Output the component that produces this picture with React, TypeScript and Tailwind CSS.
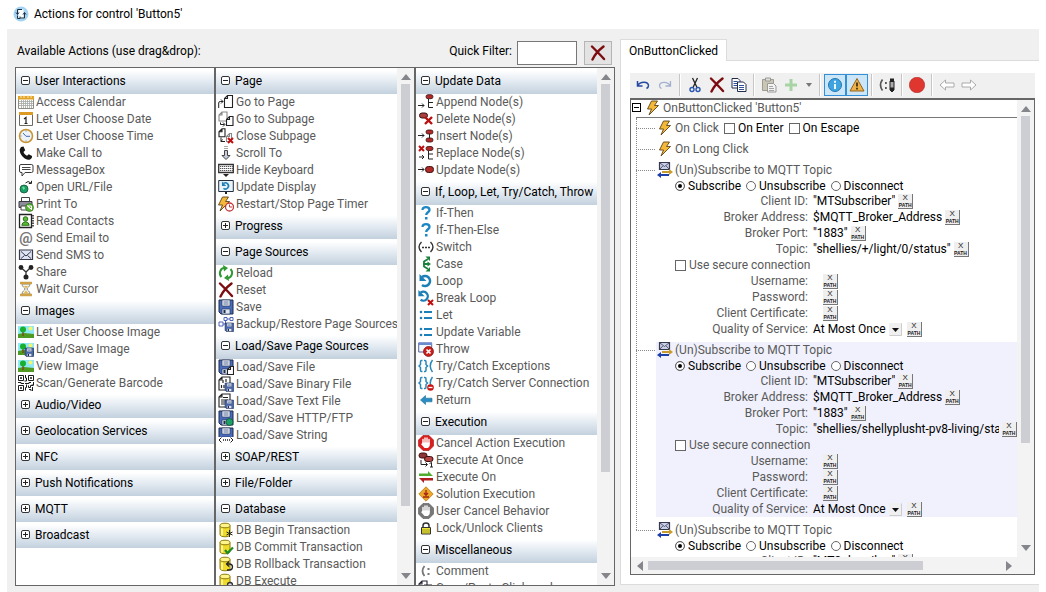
import React from "react"

const floppy = (
  <g>
    <path d="M1 1h14v14H3l-2-2z" fill="#4a6cb8" stroke="#1d2b50" />
    <path d="M4 1h8v6H4z" fill="#e8edf5" stroke="#1d2b50" strokeWidth=".6" />
    <path d="M5.500 3h5M5.500 5h5" stroke="#5f7299" />
    <path d="M4 10h8v5H4z" fill="#dfe5ee" stroke="#1d2b50" strokeWidth=".6" />
    <path d="M5.500 11h2v3h-2z" fill="#1d2b50" />
  </g>
)

const smallFloppy = <g transform="translate(6.500 6.500) scale(.6)">{floppy}</g>

const landscape = (
  <g>
    <path d="M0 2h16v12H0z" fill="#8fe9f5" />
    <circle cx="12.500" cy="4.500" r="2" fill="#f3f56a" />
    <path d="M0 10l6-1 10 1v4H0z" fill="#4f9a20" />
    <path d="M4.300 7h1.400v5H4.300z" fill="#7a4a12" />
    <circle cx="5" cy="5.500" r="3" fill="#18b02c" />
  </g>
)

const smallX = <path d="M10 10l5 5M15 10l-5 5" stroke="#c00d0d" strokeWidth="2" />

const database = (
  <g>
    <path d="M2 3.500v9c0 1.300 2 2.300 5 2.300s5-1 5-2.300v-9" fill="#f0dc28" stroke="#8c7a10" />
    <ellipse cx="7" cy="3.500" rx="5" ry="2.300" fill="#fff58a" stroke="#8c7a10" />
    <path d="M4 6.500v7" stroke="#fffbc0" strokeWidth="1.500" />
  </g>
)

const bolt = <path d="M6.500 1h6L9.500 5.500h4L4 15l2.500-6H2.500z" fill="#f5b93a" stroke="#5f4418" strokeWidth=".9" strokeLinejoin="round" />

const loopArrow = (
  <g>
    <path d="M4 4A5 5 0 1 1 4 12" fill="none" stroke="#1d7fb8" strokeWidth="2.600" />
    <path d="M1.500 1v7h7z" fill="#1d7fb8" />
  </g>
)

const hand = (
  <g>
    <path d="M5 9V4.500M7 8V3M9 8V3M11 9V4.500" stroke="#fff" strokeWidth="1.400" strokeLinecap="round" />
    <path d="M4.300 7.500h7.400V11L10 13H6.500L3 9l1-.5z" fill="#fff" />
  </g>
)

const nodeBlob = (y: number) => (
  <rect x="8" y={y} width="7" height="4" rx="2" fill="#b02a2a" stroke="#3d1010" strokeWidth=".8" />
)

const page = (x: number, y: number, w: number, h: number, stroke: string) => (
  <path d={`M${x + 3} ${y}h${w - 3}v${h}h${-w}v${3 - h}zv3h-3`} fill="#fff" stroke={stroke} strokeWidth="1.100" />
)

const letAssign = (
  <g fill="#1d7fb8">
    <circle cx="3" cy="5" r="1.300" />
    <circle cx="3" cy="11" r="1.300" />
    <path d="M6 4h8v2H6zM6 10h8v2H6z" />
  </g>
)

const braces = (
  <path
    d="M4.500 2.500H3.500Q2.500 2.500 2.500 4v2.500L1 8l1.500 1.500V12q0 1.500 1 1.500h1M6 2.500h1Q8 2.500 8 4v2.500L9.500 8 8 9.500V12q0 1.500-1 1.500H6M14.500 2q-4.500 6 0 12"
    fill="none"
    stroke="#2a88b8"
    strokeWidth="1.500"
  />
)

const question = (
  <g>
    <path d="M4.500 5C4.500 1 11.500 1.300 11.500 5c0 2.300-3.300 2.300-3.300 5" fill="none" stroke="#1d86c4" strokeWidth="2.300" />
    <path d="M7 12h2.500v2.500H7z" fill="#1d86c4" />
  </g>
)

const redX = <path d="M2 1.500c3 3 8 8 12 12.500M13.500 1.500C9 5 5 9 2.500 14.500" fill="none" stroke="#7c0c10" strokeWidth="2.400" strokeLinecap="round" />

const clock = (
  <g>
    <circle cx="8" cy="8" r="6.500" fill="#eef3fa" stroke="#c79533" strokeWidth="1.600" />
    <path d="M5 5l3 3.300h4" fill="none" stroke="#3d6fae" />
    <path d="M8 2.500v1M8 12.500v1M2.500 8h1" stroke="#777" />
  </g>
)

const icons: Record<string, React.ReactNode> = {
  calendar: (
    <g>
      <path d="M.5 2.500h15v12H.5z" fill="#fff" stroke="#8d8d80" />
      <path d="M0 2h16v3.500H0z" fill="#e2a326" />
      <path d="M3 1v3M6 1v3M10 1v3M13 1v3" stroke="#fbe8b8" />
      <path d="M1 7.500h14M1 9.500h14M1 11.500h14M3.500 6v8M5.500 6v8M7.500 6v8M9.500 6v8M11.500 6v8M13.500 6v8" stroke="#a5aaa5" strokeWidth=".8" />
    </g>
  ),
  date: (
    <g>
      <path d="M1.500 1.500h13v13h-13z" fill="#fff" stroke="#6b6a60" />
      <path d="M1 1h14v3H1z" fill="#dd9a22" />
      <path d="M6 8l2-1.500v6M6.500 12.500h3" fill="none" stroke="#222" strokeWidth="1.200" />
    </g>
  ),
  clock,
  phone: <path d="M3 2l2.500-.5 1.700 3.700L5.500 7c.6 1.700 1.800 3 3.500 3.800l1.800-1.600L14 11c.5 2-1.500 4-4 3.700C5.500 14 1.500 9 1.700 4.500z" fill="#161616" />,
  message: (
    <g>
      <path d="M3 2.500h10.500q1.500 0 1.500 1.500v5q0 1.500-1.500 1.500H7L4 14v-3.500H3Q1.500 10.500 1.500 9V4Q1.500 2.500 3 2.500z" fill="#fff" stroke="#3a3a3a" />
      <path d="M4 5.500h8.500M4 7.500h8.500" stroke="#444" />
    </g>
  ),
  url: (
    <g>
      <circle cx="6" cy="10" r="4" fill="#18a06a" stroke="#174f34" strokeWidth=".8" />
      <path d="M4 8l2-.5 1 2-1.500 1.500z" fill="#6ddf8a" />
      <path d="M7.500 4Q10 1 13 4M10.800 4.500h2.700V1.800" fill="none" stroke="#222" />
    </g>
  ),
  print: (
    <g>
      <path d="M3.500 1.500h8v4h-8z" fill="#fff" stroke="#444" />
      <path d="M1 5.500h13v6H1z" fill="#8d8d99" stroke="#3a3a44" />
      <path d="M3 10h7v4H3z" fill="#fff" stroke="#444" />
      <circle cx="11.500" cy="11.500" r="4" fill="#5cb338" stroke="#2d6e17" strokeWidth=".7" />
      <path d="M9.500 10h4v3.500zM9.500 9.500l4 4" fill="none" stroke="#fff" />
    </g>
  ),
  contacts: (
    <g>
      <path d="M1.500 1.500h12v13h-12z" fill="#fff" stroke="#222" strokeWidth="1.300" />
      <path d="M15 2v12" stroke="#222" strokeWidth="1.500" strokeDasharray="1.500 1" />
      <circle cx="7.500" cy="6" r="2.300" fill="#5bbd35" stroke="#2b751c" />
      <path d="M3.800 12.300q0-3 3.700-3.500 3.700.5 3.700 3.500z" fill="#5bbd35" stroke="#2b751c" />
    </g>
  ),
  sms: (
    <g>
      <path d="M1.500 3h13v9.500h-13z" fill="#dfe3f3" stroke="#35394a" strokeWidth="1.200" />
      <path d="M3 4.500l5 4.500 5-4.500M3 11.500l3.500-3M13 11.500l-3.500-3" fill="none" stroke="#35394a" />
    </g>
  ),
  share: (
    <g>
      <path d="M3 3.500L8 8l5-5M8 8v4" fill="none" stroke="#333" strokeWidth="1.300" />
      <circle cx="3" cy="3.500" r="2.400" fill="#222" />
      <circle cx="13" cy="3.500" r="2.400" fill="#222" />
      <circle cx="8" cy="13" r="2.500" fill="#222" />
    </g>
  ),
  hourglass: (
    <g>
      <path d="M4 3c0 3 3 3.500 3 5s-3 2-3 5h8c0-3-3-3.500-3-5s3-2 3-5z" fill="#f6f3e4" stroke="#8a8f88" />
      <path d="M2 .8h12v2.400H2zM2 12.800h12v2.400H2z" fill="#cfa24a" />
      <path d="M5.500 12.500L8 9.500l2.500 3zM6 5h4L8 7.500z" fill="#e3b64f" />
    </g>
  ),
  image: landscape,
  loadImage: (
    <g>
      {landscape}
      {smallFloppy}
    </g>
  ),
  barcode: (
    <path
      d="M.5.500h5v5h-5zM10.500.500h5v5h-5zM.5 10.500h5v5h-5zM2.500 2.500h1v1h-1zM12.500 2.500h1v1h-1zM2.500 12.500h1v1h-1zM7.500 0v3h1v3h-2M0 7.500h3v1h3M7 8.500h4v-1h2M15.500 7v3h-2M8.500 9.500v3h-1v3M10.500 10.500v2h2v-2h3M11 14.500h2v1.500M14.500 12v4"
      fill="none"
      stroke="#1c1c1c"
    />
  ),
  goPage: (
    <g>
      {page(6.500, 1.500, 8, 12, "#222")}
      <path d="M.7 14V9q0-1.500 1.500-1.500H5M3 5.500l2 2-2 2" fill="none" stroke="#222" />
    </g>
  ),
  goSubpage: (
    <g>
      {page(1, 1, 8, 9, "#888")}
      {page(8.500, 5.500, 6.500, 9, "#222")}
      <path d="M2.500 11.500v2h4M5 11.500l2 2-2 2" fill="none" stroke="#222" />
    </g>
  ),
  closeSubpage: (
    <g>
      {page(1, .8, 6, 8, "#222")}
      {page(8.500, 5.500, 5, 8, "#888")}
      <path d="M3 9.500v4h4M4.500 11.500l-1.500 2" fill="none" stroke="#222" />
      {smallX}
    </g>
  ),
  scroll: (
    <g>
      <path d="M6 1.500h4M6 3.500h4" stroke="#aaa" />
      <path d="M6.500 5.500h3v5H12L8 14.500 4 10.500h2.500z" fill="#c9ccdc" stroke="#444" />
    </g>
  ),
  keyboard: (
    <g>
      <path d="M.7 2.500h14.600v8H.7z" fill="#fff" stroke="#333" strokeWidth="1.300" />
      <path d="M2 4.500h13M2 6.500h13M2 8.500h13" stroke="#555" strokeDasharray="1.300 .7" />
      <path d="M5 12h6L8 15z" fill="#222" />
    </g>
  ),
  display: (
    <g>
      <path d="M.7 1.500h14.600v11H.7z" fill="#e9f3fa" stroke="#223040" />
      <g transform="translate(3 2) scale(.62)">{loopArrow}</g>
      <path d="M7 13h2v2H7z" fill="#222" />
    </g>
  ),
  timer: (
    <g>
      <g transform="translate(-2 0)">{bolt}</g>
      <circle cx="11.500" cy="11" r="4" fill="#fff" stroke="#c23a3a" strokeWidth="1.300" />
      <path d="M11.500 8.500V11H14" fill="none" stroke="#c23a3a" />
    </g>
  ),
  reload: (
    <g>
      <path d="M3.500 12A5.500 5.500 0 0 1 6 2.800M12.500 4A5.500 5.500 0 0 1 10 13.200" fill="none" stroke="#2f9a33" strokeWidth="2" />
      <path d="M5 0l5 3-4 3.500zM11 16l-5-3 4-3.500z" fill="#2f9a33" />
    </g>
  ),
  redX,
  save: floppy,
  backup: (
    <g>
      <path d="M1 6h4v4H1zM6 1.500h3v3H6zM12 1.500h3v3h-3zM5 8h4M7.500 5v8M9 3h3" fill="none" stroke="#4c63b8" />
      {smallFloppy}
    </g>
  ),
  saveFile: (
    <g>
      {floppy}
      {page(9.500, 7.500, 6, 8, "#222")}
    </g>
  ),
  saveBinary: (
    <g>
      {page(1, 1, 11, 13, "#222")}
      <path d="M5 4v3M8 3v3M3.500 9v3M6 9v3" stroke="#222" strokeWidth="1.200" />
      {smallFloppy}
    </g>
  ),
  saveText: (
    <g>
      {page(1, 1, 11, 13, "#222")}
      <path d="M5 4.500h5M3 7h7M3 9h5M3 11h4" stroke="#222" />
      {smallFloppy}
    </g>
  ),
  saveHttp: (
    <g>
      {floppy}
      <circle cx="11.500" cy="12" r="3.500" fill="#1ba367" stroke="#174f34" strokeWidth=".8" />
    </g>
  ),
  saveString: (
    <g>
      {floppy}
      <path d="M0 10h16v6H0z" fill="#fff" />
      <path d="M3.500 10.500L1 13l2.500 2.500M12.500 10.500L15 13l-2.500 2.500" fill="none" stroke="#222" />
      <path d="M5 13h7" stroke="#222" strokeDasharray="1 1" strokeWidth="1.500" />
    </g>
  ),
  dbBegin: (
    <g>
      {database}
      <path d="M11.500 8v7M8.500 10l6 3M14.500 10l-6 3" stroke="#222" />
    </g>
  ),
  dbCommit: (
    <g>
      {database}
      <path d="M7 11l2.500 3L15 8.500" fill="none" stroke="#1f8d27" strokeWidth="2.200" />
    </g>
  ),
  dbRollback: (
    <g>
      {database}
      <path d="M9 8h3q2.500.5 2.500 3T12 14H9M11 5.500L8.500 8l2.500 2.500" fill="none" stroke="#222" strokeWidth="1.300" />
    </g>
  ),
  dbExecute: (
    <g>
      {database}
      <circle cx="12" cy="12" r="2.500" fill="#ddd" stroke="#333" strokeWidth="1.300" />
    </g>
  ),
  appendNode: (
    <g>
      {nodeBlob(.7)}
      <path d="M10.500 5v8.500M10.500 8.500H15M10.500 13.500H15M0 11.500h6M4 9.500l2 2-2 2" fill="none" stroke="#222" />
    </g>
  ),
  deleteNode: (
    <g>
      <rect x="1.500" y="2" width="8" height="5" rx="2.500" fill="#a84040" stroke="#3d1010" />
      <path d="M7 6l7 7M14 6l-7 7" stroke="#b80f0f" strokeWidth="2.400" />
    </g>
  ),
  insertNode: (
    <g>
      {nodeBlob(2)}
      {nodeBlob(10)}
      <path d="M11.500 6v4M0 7.500h6M4 5.500l2 2-2 2" fill="none" stroke="#222" />
    </g>
  ),
  replaceNode: (
    <g>
      <path d="M1 1l5 5M6 1L1 6" stroke="#b80f0f" strokeWidth="2" />
      {nodeBlob(1.500)}
      <path d="M10.500 6v8M10.500 9H15M10.500 14H15M1 12h5M4 10l2 2-2 2" fill="none" stroke="#222" />
    </g>
  ),
  updateNode: (
    <g>
      <rect x="7.500" y="4.500" width="8" height="6" rx="2.800" fill="#b02a2a" stroke="#3d1010" />
      <path d="M0 7.500h6M4 5.500l2 2-2 2" fill="none" stroke="#222" />
    </g>
  ),
  question,
  switch: (
    <g>
      <path d="M3.500 3q-5 5 0 10M12.500 3q5 5 0 10" fill="none" stroke="#333" strokeWidth="1.400" />
      <path d="M4 8.500h2M7 8.500h2M10 8.500h2" stroke="#333" strokeWidth="1.600" />
    </g>
  ),
  caseIcon: (
    <g>
      <path d="M6 8V5.500L10 3M6 8v2.500L10 13M5 8h5" fill="none" stroke="#1a7f3c" strokeWidth="1.800" />
      <path d="M7.500.5H12V5zM7.500 15.500H12V11zM9.500 5.500L13 8l-3.500 2.500z" fill="#1a7f3c" />
    </g>
  ),
  loop: loopArrow,
  breakLoop: (
    <g>
      <g transform="translate(-1 -1) scale(.9)">{loopArrow}</g>
      {smallX}
    </g>
  ),
  letAssign,
  throwIcon: (
    <g>
      <path d="M.7 2h13v9H.7z" fill="#f4f7fc" stroke="#55669c" />
      <path d="M.5 1.500h13.500v2.500H.5z" fill="#6b8bd0" />
      <circle cx="10.500" cy="10.500" r="5" fill="#c9201c" stroke="#7d1010" strokeWidth=".7" />
      <path d="M8.500 8.500l4 4M12.500 8.500l-4 4" stroke="#fff" strokeWidth="1.700" />
    </g>
  ),
  braces,
  bracesServer: (
    <g>
      {braces}
      <circle cx="12.500" cy="12.500" r="3.300" fill="#cc1414" />
      <path d="M10.500 12.500h4" stroke="#fff" strokeWidth="1.300" />
    </g>
  ),
  returnIcon: <path d="M2.500 8L7.500 3.500v2.700H14v3.600H7.500v2.700z" fill="#2b8cc0" stroke="#1d6f9e" strokeWidth=".6" />,
  cancel: (
    <g>
      <path d="M5 .5h6L15.500 5v6L11 15.500H5L.5 11V5z" fill="#da1e1e" stroke="#a30e0e" strokeWidth=".6" />
      {hand}
    </g>
  ),
  executeOnce: (
    <g>
      <rect x="1" y="1" width="8" height="5" rx="2.500" fill="#8d3434" stroke="#3d1010" />
      <rect x="6.500" y="4.500" width="8.500" height="5" rx="2.500" fill="#b54747" stroke="#3d1010" />
      <path d="M3 8v4.500h6M7.500 10.500l2 2-2 2M11.500 11.500l2-1v4.500M12 15h3" fill="none" stroke="#222" />
    </g>
  ),
  executeOn: (
    <g>
      <path d="M1 4.500h9V2l5 5H1z" fill="#4fae2f" />
      <path d="M15 9H1l5 5v-2.500h9z" fill="#b02020" />
    </g>
  ),
  solution: (
    <g>
      <path d="M8 .8L15.200 8 8 15.200.8 8z" fill="#eba829" stroke="#b57a14" strokeWidth=".8" />
      <path d="M8 4v5M6 7l2 2.300L10 7M5 11h6" fill="none" stroke="#a52615" strokeWidth="1.300" />
    </g>
  ),
  userCancel: (
    <g>
      <path d="M5 .5h6L15.500 5v6L11 15.500H5L.5 11V5z" fill="#777" stroke="#555" strokeWidth=".6" />
      {hand}
    </g>
  ),
  lock: (
    <g>
      <path d="M5 8V5.500Q5 3 8 3t3 2.500V8" fill="none" stroke="#333" strokeWidth="1.500" />
      <path d="M3.500 7.500h9v6.500h-9z" fill="#ece43a" stroke="#333" />
      <path d="M4 10h8M4 12h8" stroke="#8f8a1b" strokeWidth=".8" />
    </g>
  ),
  comment: (
    <g>
      <path d="M6.500 3q-4 5 0 10" fill="none" stroke="#777" strokeWidth="1.800" />
      <path d="M9.500 5h2v2h-2zM9.500 10h2v2h-2z" fill="#777" />
    </g>
  ),
  clipboard: (
    <g>
      {page(1, 1, 8, 10, "#223")}
      <path d="M6 5h8v10H6z" fill="#6c88d0" stroke="#223" />
    </g>
  ),
  bolt,
  mqtt: (
    <g>
      <path d="M2.500.500h10v7h-10z" fill="#c9d0ea" stroke="#35394a" strokeWidth="1.200" />
      <path d="M3 1l4.500 3.500L12 1M3 7l2.800-3M12 7L9.200 4" fill="none" stroke="#35394a" strokeWidth=".8" />
      <path d="M5 9h7V7l4 3-4 3v-2H5z" fill="#c99a2e" />
      <path d="M12 12H4v-2l-4 3 4 3v-2h8z" fill="#1c3fa8" />
    </g>
  ),
  undo: <path d="M2.500 4v5h5M3 8.500C5 4.500 13 4 13.500 8.500q0 2-2 3" fill="none" stroke="#2448a0" strokeWidth="1.500" />,
  redo: <path d="M13.500 4v5h-5M13 8.500C11 4.500 3 4 2.500 8.500q0 2 2 3" fill="none" stroke="#a3b1cf" strokeWidth="1.300" />,
  cut: (
    <g>
      <path d="M5.500 1L10 10.500M10.500 1L6 10.500" stroke="#222" strokeWidth="1.300" />
      <circle cx="5" cy="12.500" r="2" fill="none" stroke="#2a56b0" strokeWidth="1.400" />
      <circle cx="11" cy="12.500" r="2" fill="none" stroke="#2a56b0" strokeWidth="1.400" />
    </g>
  ),
  copy: (
    <g>
      <path d="M1 1.500h6l2 2V11H1z" fill="#fff" stroke="#222b4a" />
      <path d="M2.500 4.500h4M2.500 6.500h4M2.500 8.500h4" stroke="#34509a" />
      <path d="M6.500 5h6L15 7.500v7H6.500z" fill="#fff" stroke="#222b4a" />
      <path d="M8 8.500h5M8 10.500h5M8 12.500h5" stroke="#34509a" />
    </g>
  ),
  paste: (
    <g>
      <path d="M1.500 2.500h11v11h-11z" fill="#cbc6b4" stroke="#a09c8d" />
      <path d="M4.500 1h5v3h-5z" fill="#ddd" stroke="#999" />
      <path d="M6.500 6.500h6L15 9v6H6.500z" fill="#f3f3f3" stroke="#999" />
      <path d="M8 9.500h4M8 11.500h5M8 13.500h5" stroke="#a5a5a5" />
    </g>
  ),
  add: <path d="M6.500 2h3v4.500H14v3H9.500V14h-3V9.500H2v-3h4.500z" fill="#a7d3a5" />,
  info: (
    <g>
      <circle cx="8" cy="8" r="6.500" fill="#3fa4e0" stroke="#2378b0" />
      <path d="M8 3.800v2M8 7v5" stroke="#fff" strokeWidth="1.800" />
    </g>
  ),
  warning: (
    <g>
      <path d="M8 1.500L15 14H1z" fill="#f0b248" stroke="#8f6420" strokeLinejoin="round" />
      <path d="M8 5.500v4M8 10.800v1.700" stroke="#2f220d" strokeWidth="1.600" />
    </g>
  ),
  commentToggle: (
    <g>
      <path d="M3.500 2.500q-4 5.500 0 11" fill="none" stroke="#555" strokeWidth="1.700" />
      <path d="M6 5h1.800v2H6zM6 10h1.800v2H6z" fill="#555" />
      <path d="M11 4h4v9l-2 2-2-2z" fill="#aaa" stroke="#222" />
      <path d="M11 1.500h4V5h-4zM11 10.500h4V13l-2 2-2-2z" fill="#222" />
    </g>
  ),
  breakpoint: <circle cx="8" cy="8" r="7.700" fill="#df3630" stroke="#b02a26" strokeWidth=".6" />,
  back: <path d="M1 8l5.500-5v3H15v4H6.500v3z" fill="#fff" stroke="#aaa" />,
  forward: <path d="M15 8L9.500 3v3H1v4h8.500v3z" fill="#fff" stroke="#aaa" />,
}

function Icon({ name }: { name: string }) {
  return (
    <svg viewBox="0 0 16 16" className="w-4 h-4 shrink-0" aria-hidden="true">
      {icons[name]}
    </svg>
  )
}

interface Section {
  title: string
  items?: [string, string][]
}

const columns: Section[][] = [
  [
    {
      title: "User Interactions",
      items: [
        ["calendar", "Access Calendar"],
        ["date", "Let User Choose Date"],
        ["clock", "Let User Choose Time"],
        ["phone", "Make Call to"],
        ["message", "MessageBox"],
        ["url", "Open URL/File"],
        ["print", "Print To"],
        ["contacts", "Read Contacts"],
        ["at", "Send Email to"],
        ["sms", "Send SMS to"],
        ["share", "Share"],
        ["hourglass", "Wait Cursor"],
      ],
    },
    {
      title: "Images",
      items: [
        ["image", "Let User Choose Image"],
        ["loadImage", "Load/Save Image"],
        ["image", "View Image"],
        ["barcode", "Scan/Generate Barcode"],
      ],
    },
    { title: "Audio/Video" },
    { title: "Geolocation Services" },
    { title: "NFC" },
    { title: "Push Notifications" },
    { title: "MQTT" },
    { title: "Broadcast" },
  ],
  [
    {
      title: "Page",
      items: [
        ["goPage", "Go to Page"],
        ["goSubpage", "Go to Subpage"],
        ["closeSubpage", "Close Subpage"],
        ["scroll", "Scroll To"],
        ["keyboard", "Hide Keyboard"],
        ["display", "Update Display"],
        ["timer", "Restart/Stop Page Timer"],
      ],
    },
    { title: "Progress" },
    {
      title: "Page Sources",
      items: [
        ["reload", "Reload"],
        ["redX", "Reset"],
        ["save", "Save"],
        ["backup", "Backup/Restore Page Sources"],
      ],
    },
    {
      title: "Load/Save Page Sources",
      items: [
        ["saveFile", "Load/Save File"],
        ["saveBinary", "Load/Save Binary File"],
        ["saveText", "Load/Save Text File"],
        ["saveHttp", "Load/Save HTTP/FTP"],
        ["saveString", "Load/Save String"],
      ],
    },
    { title: "SOAP/REST" },
    { title: "File/Folder" },
    {
      title: "Database",
      items: [
        ["dbBegin", "DB Begin Transaction"],
        ["dbCommit", "DB Commit Transaction"],
        ["dbRollback", "DB Rollback Transaction"],
        ["dbExecute", "DB Execute"],
      ],
    },
  ],
  [
    {
      title: "Update Data",
      items: [
        ["appendNode", "Append Node(s)"],
        ["deleteNode", "Delete Node(s)"],
        ["insertNode", "Insert Node(s)"],
        ["replaceNode", "Replace Node(s)"],
        ["updateNode", "Update Node(s)"],
      ],
    },
    {
      title: "If, Loop, Let, Try/Catch, Throw",
      items: [
        ["question", "If-Then"],
        ["question", "If-Then-Else"],
        ["switch", "Switch"],
        ["caseIcon", "Case"],
        ["loop", "Loop"],
        ["breakLoop", "Break Loop"],
        ["letAssign", "Let"],
        ["letAssign", "Update Variable"],
        ["throwIcon", "Throw"],
        ["braces", "Try/Catch Exceptions"],
        ["bracesServer", "Try/Catch Server Connection"],
        ["returnIcon", "Return"],
      ],
    },
    {
      title: "Execution",
      items: [
        ["cancel", "Cancel Action Execution"],
        ["executeOnce", "Execute At Once"],
        ["executeOn", "Execute On"],
        ["solution", "Solution Execution"],
        ["userCancel", "User Cancel Behavior"],
        ["lock", "Lock/Unlock Clients"],
      ],
    },
    {
      title: "Miscellaneous",
      items: [
        ["comment", "Comment"],
        ["clipboard", "Copy/Paste Clipboard"],
      ],
    },
  ],
]

function Arrow({ className }: { className: string }) {
  return (
    <svg viewBox="0 0 10 6" className={`w-[10px] h-[6px] shrink-0 ${className}`} aria-hidden="true">
      <path d="M0 6l5-6 5 6z" fill="#85868c" />
    </svg>
  )
}

function VerticalScrollbar({ thumb }: { thumb: string }) {
  return (
    <div className="w-[17px] shrink-0 bg-[#f3f3f4] flex flex-col items-center py-[6px] gap-[4px]">
      <Arrow className="" />
      <div className="flex-1 w-[9px]">
        <div className={`bg-[#cdced3] ${thumb}`} />
      </div>
      <Arrow className="rotate-180" />
    </div>
  )
}

function ActionSection({ section }: { section: Section }) {
  return (
    <section>
      <button className="flex w-full h-[26px] items-center gap-[5px] pl-[5px] bg-linear-to-b from-white from-10% via-[#e4ebf2] via-50% to-[#c3d1de] text-left text-black">
        <svg viewBox="0 0 9 9" className="w-[9px] h-[9px] mb-[2px] shrink-0" aria-hidden="true">
          <rect x=".5" y=".5" width="8" height="8" rx="1.500" fill="#fff" stroke="#333" />
          <path d={section.items ? "M2 4.500h5" : "M2 4.500h5M4.500 2v5"} stroke="#222" />
        </svg>
        <span className="whitespace-nowrap">{section.title}</span>
      </button>
      <ul>
        {section.items?.map(([icon, label]) => (
          <li key={label} className="flex h-[17px] items-center gap-[2px] pb-px pl-[2px] whitespace-nowrap text-[#5a5a5a]">
            {icon === "at" ? (
              <span className="w-4 text-center text-[15px] font-bold text-[#777]">@</span>
            ) : (
              <Icon name={icon} />
            )}
            {label}
          </li>
        ))}
      </ul>
    </section>
  )
}

function ActionColumn({ sections, thumb }: { sections: Section[]; thumb?: string }) {
  return (
    <div className="flex min-h-0 min-w-0 bg-white">
      <div className="flex-1 min-w-0 overflow-hidden">
        {sections.map((section) => (
          <ActionSection key={section.title} section={section} />
        ))}
      </div>
      {thumb && <VerticalScrollbar thumb={thumb} />}
    </div>
  )
}

function ToolButton({ name, label, active }: { name: string; label: string; active?: boolean }) {
  return (
    <button
      aria-label={label}
      className={`flex w-[22px] h-[22px] items-center justify-center ${active ? "border border-[#3390d6] bg-[#cde6f7]" : ""}`}
    >
      <Icon name={name} />
    </button>
  )
}

function Separator() {
  return <div className="w-[2px] h-[22px] mx-[3px] border-l border-[#c6c6c6] bg-white" />
}

function Toolbar() {
  return (
    <div className="flex h-[25px] shrink-0 items-center bg-[#f0f0f0] pl-[2px] pb-px">
      <ToolButton name="undo" label="Undo" />
      <ToolButton name="redo" label="Redo" />
      <Separator />
      <ToolButton name="cut" label="Cut" />
      <ToolButton name="redX" label="Delete" />
      <ToolButton name="copy" label="Copy" />
      <Separator />
      <ToolButton name="paste" label="Paste" />
      <ToolButton name="add" label="Add" />
      <button aria-label="More" className="flex w-[14px] h-[22px] items-center justify-center">
        <svg viewBox="0 0 6 4" className="w-[6px] h-[4px]" aria-hidden="true">
          <path d="M0 0h6L3 4z" fill="#777" />
        </svg>
      </button>
      <Separator />
      <ToolButton name="info" label="Show information" active />
      <ToolButton name="warning" label="Show warnings" active />
      <Separator />
      <ToolButton name="commentToggle" label="Toggle comment" />
      <Separator />
      <ToolButton name="breakpoint" label="Breakpoint" />
      <Separator />
      <ToolButton name="back" label="Back" />
      <ToolButton name="forward" label="Forward" />
    </div>
  )
}

function XPathButton() {
  return (
    <button
      aria-label="Edit XPath"
      className="flex w-[15px] h-[15px] shrink-0 flex-col items-center justify-center border-r border-b border-[#777] bg-[#efefef] font-['Liberation_Sans',sans-serif] text-[#222]"
    >
      <span className="text-[8px] leading-[8px]">X</span>
      <span className="text-[5px] leading-[6px] font-bold">PATH</span>
    </button>
  )
}

function Checkbox({ label, dark }: { label: string; dark?: boolean }) {
  return (
    <label className={`flex items-center gap-[3px] ${dark ? "text-black" : ""}`}>
      <input type="checkbox" className="appearance-none w-[11px] h-[11px] border border-[#666] bg-white checked:bg-[#333]" />
      {label}
    </label>
  )
}

function Field({ label, value }: { label: string; value?: string }) {
  return (
    <div className="flex h-4 items-center gap-[5px]">
      <span className="w-[133px] shrink-0 text-right">{label}:</span>
      <span className="flex flex-1 min-w-0 items-center gap-[3px] text-black">
        <span className="min-w-[7px] overflow-hidden">{value}</span>
        <XPathButton />
      </span>
    </div>
  )
}

function Stub() {
  return <span className="w-[19px] shrink-0 border-t border-dotted border-[#888]" />
}

function MqttAction({ id, topic, selected }: { id: string; topic: string; selected?: boolean }) {
  return (
    <div className="flex">
      <div className="flex w-[19px] h-4 shrink-0 items-center">
        <Stub />
      </div>
      <div className={`flex-1 min-w-0 pl-px ml-px ${selected ? "bg-[#f0f1fc]" : ""}`}>
        <div className="flex h-4 items-center gap-[2px]">
          <Icon name="mqtt" />
          (Un)Subscribe to MQTT Topic
        </div>
        <div className="pl-[18px]">
          <div className="flex h-[15px] items-center gap-[5px] text-black">
            {["Subscribe", "Unsubscribe", "Disconnect"].map((mode) => (
              <label key={mode} className="flex items-center gap-[3px]">
                <input
                  type="radio"
                  name={`mode-${id}`}
                  defaultChecked={mode === "Subscribe"}
                  className="appearance-none w-[10px] h-[10px] rounded-full border border-[#666] bg-white checked:bg-black checked:shadow-[inset_0_0_0_2px_white]"
                />
                {mode}
              </label>
            ))}
          </div>
          <Field label="Client ID" value={'"MTSubscriber"'} />
          <Field label="Broker Address" value="$MQTT_Broker_Address" />
          <Field label="Broker Port" value={'"1883"'} />
          <Field label="Topic" value={topic} />
          <div className="flex h-4 items-center">
            <Checkbox label="Use secure connection" />
          </div>
          <Field label="Username" />
          <Field label="Password" />
          <Field label="Client Certificate" />
          <div className="flex h-4 items-center gap-[5px]">
            <label htmlFor={`qos-${id}`} className="w-[133px] shrink-0 text-right">
              Quality of Service:
            </label>
            <span className="relative flex items-center text-black">
              <select id={`qos-${id}`} className="appearance-none w-[89px] h-4 leading-4">
                <option>At Most Once</option>
                <option>At Least Once</option>
                <option>Exactly Once</option>
              </select>
              <svg viewBox="0 0 13 13" className="absolute right-0 w-[13px] h-[13px] pointer-events-none" aria-hidden="true">
                <path d="M0 0h13v13H0z" fill="#f0f0f0" />
                <path d="M.5 12.500h12V.500" fill="none" stroke="#ccc" />
                <path d="M3 5h7l-3.500 4z" fill="#111" />
              </svg>
            </span>
            <XPathButton />
          </div>
        </div>
      </div>
    </div>
  )
}

function ActionTree() {
  return (
    <div className="flex flex-1 min-h-0 flex-col border border-t-2 border-[#666] bg-white text-[#5a5a5a]">
      <div className="flex flex-1 min-h-0">
        <div className="flex-1 min-w-0 overflow-hidden whitespace-nowrap">
          <div className="flex h-[17px] items-center pb-[2px] pl-px">
            <button aria-label="Collapse" className="flex w-[9px] h-[9px] items-center justify-center border border-black bg-white">
              <span className="w-[5px] h-px bg-black" />
            </button>
            <span className="flex items-center gap-[2px] ml-[4px]">
              <Icon name="bolt" />
              OnButtonClicked 'Button5'
            </span>
          </div>
          <div className="ml-[5px] border-t border-[#777]">
            <div className="relative flex flex-col gap-[5px] before:absolute before:left-0 before:top-0 before:h-[412px] before:border-l before:border-dotted before:border-[#888]">
              <div className="-mb-[3px]">
                <div className="flex h-[21px] items-center pb-px">
                  <Stub />
                  <span className="flex items-center gap-[2px] ml-[2px]">
                    <Icon name="bolt" />
                    On Click
                  </span>
                  <span className="flex items-center gap-[5px] ml-[5px]">
                    <Checkbox label="On Enter" dark />
                    <Checkbox label="On Escape" dark />
                  </span>
                </div>
                <div className="flex h-[21px] items-center pb-px">
                  <Stub />
                  <span className="flex items-center gap-[2px] ml-[2px]">
                    <Icon name="bolt" />
                    On Long Click
                  </span>
                </div>
              </div>
              <MqttAction id="light" topic={'"shellies/+/light/0/status"'} />
              <MqttAction id="living" topic={'"shellies/shellyplusht-pv8-living/status"'} selected />
              <MqttAction id="third" topic={'"shellies/+/status"'} />
            </div>
          </div>
        </div>
        <VerticalScrollbar thumb="h-[77%]" />
      </div>
      <div className="flex h-[17px] shrink-0 items-center gap-[3px] bg-[#f3f3f4] pl-[4px] pr-[20px]">
        <Arrow className="-rotate-90" />
        <div className="flex-1">
          <div className="w-[78%] h-[9px] bg-[#cdced3]" />
        </div>
        <Arrow className="rotate-90" />
      </div>
    </div>
  )
}

export default function App() {
  return (
    <div className="flex h-screen flex-col bg-white px-[7px] font-[Roboto,'Open_Sans',sans-serif] text-[12px] leading-4 text-black">
      <header className="flex h-[29px] shrink-0 items-center gap-[5px] pb-[2px] pl-[6px]">
        <svg viewBox="0 0 16 16" className="w-4 h-4" aria-hidden="true">
          <circle cx="8" cy="8" r="7.500" fill="#a5d4f2" />
          <path d="M5.500 3.500h5v9h-5z" fill="#fff" />
          <path d="M4.500 8V3.500H9M3 6.500l1.500 2 1.500-2M11.500 7v5H7M10 8.500l1.500-2 1.500 2M7 10.500v2h-2.500v-3" fill="none" stroke="#1d2e40" />
        </svg>
        <h1>Actions for control 'Button5'</h1>
      </header>

      <main className="grid flex-1 min-h-0 grid-cols-[613fr_419fr] bg-[#f0f0f0]">
        <div className="flex min-h-0 min-w-0 flex-col pt-3 pb-[6px] pl-2 pr-[5px]">
          <div className="flex items-center pb-[2px] pl-[2px] pr-[3px]">
            <h2 className="flex-1 pb-1">Available Actions (use drag&amp;drop):</h2>
            <label htmlFor="quick-filter" className="pb-1">Quick Filter:</label>
            <input id="quick-filter" type="text" className="w-[60px] h-6 ml-[5px] border border-[#777] bg-white px-1" />
            <button aria-label="Clear filter" className="flex w-7 h-6 ml-[7px] items-center justify-center border border-[#b5b5b5] bg-[#e3e3e3]">
              <Icon name="redX" />
            </button>
          </div>
          <div className="grid flex-1 min-h-0 grid-cols-3 grid-rows-[minmax(0,1fr)] gap-[2px] border border-[#666] bg-[#666]">
            <ActionColumn sections={columns[0]} />
            <ActionColumn sections={columns[1]} thumb="h-[87%]" />
            <ActionColumn sections={columns[2]} thumb="h-[80%]" />
          </div>
        </div>

        <div className="flex min-h-0 min-w-0 flex-col pt-[10px] pb-[7px]">
          <div className="flex h-[22px] shrink-0">
            <button className="w-[107px] shrink-0 border border-b-0 border-[#dcdcdc] bg-white">OnButtonClicked</button>
            <div className="flex-1 border-b border-[#dcdcdc]" />
          </div>
          <div className="flex flex-1 min-h-0 flex-col border-b border-l border-[#dcdcdc] bg-white pt-[12px] pr-[4px] pb-[9px] pl-[9px]">
            <Toolbar />
            <ActionTree />
          </div>
        </div>
      </main>
    </div>
  )
}
